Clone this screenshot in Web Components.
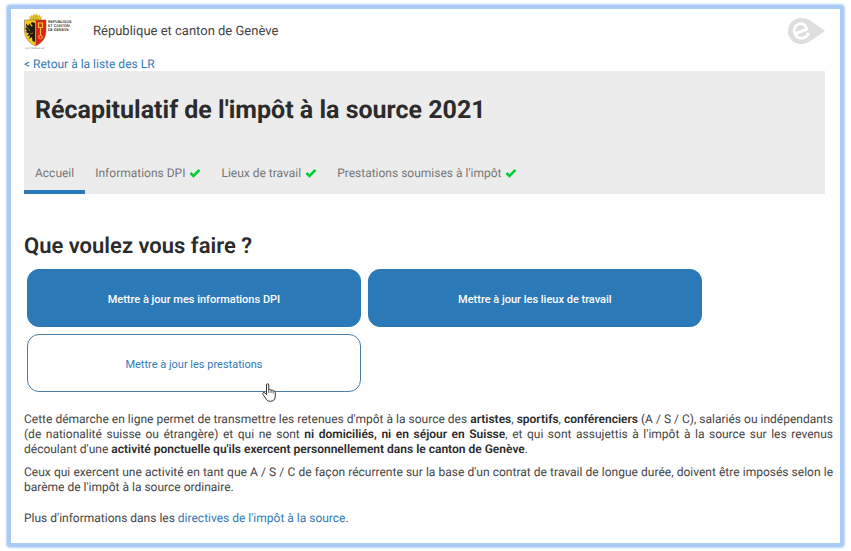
<!DOCTYPE html>
<html lang="fr">
<head>
<meta charset="utf-8">
<meta name="viewport" content="width=device-width, initial-scale=1">
<title>Récapitulatif de l'impôt à la source 2021</title>
<style>
  body {
    margin: 3px 5px 2px;
    background: #fff;
    color: #444;
    font-family: Roboto, "Liberation Sans", sans-serif;
    font-size: 12px;
    text-rendering: geometricPrecision;
    --color-link: #337ab7;
    --color-primary: #2b79b7;
    --color-title: #2b2b2b;
    --color-band: #ececec;
  }
</style>
</head>
<body>

<ge-page>
  <ge-header slot="header" label="République et canton de Genève"></ge-header>
  <ge-back-link href="#liste">&lt; Retour à la liste des LR</ge-back-link>
  <ge-banner heading="Récapitulatif de l'impôt à la source 2021">
    <ge-tab href="#accueil" active>Accueil</ge-tab>
    <ge-tab href="#dpi" done>Informations DPI</ge-tab>
    <ge-tab href="#lieux" done>Lieux de travail</ge-tab>
    <ge-tab href="#prestations" done>Prestations soumises à l'impôt</ge-tab>
  </ge-banner>
  <ge-actions heading="Que voulez vous faire ?">
    <ge-action>Mettre à jour mes informations DPI</ge-action>
    <ge-action>Mettre à jour les lieux de travail</ge-action>
    <ge-action outline>Mettre à jour les prestations</ge-action>
  </ge-actions>
  <ge-notice></ge-notice>
</ge-page>

<script>
/**
 * Small helper: opens a shadow root and fills it.
 */
class GeElement extends HTMLElement {
  constructor() {
    super();
    this.attachShadow({ mode: 'open' });
  }

  connectedCallback() {
    this.shadowRoot.innerHTML = this.render();
  }
}

class GePage extends GeElement {
  render() {
    // two nested borders: a pale halo round the blue edge
    return `
      <style>
        :host {
          display: block;
          border: 1px solid #eaf2fd;
          border-radius: 5px;
        }
        .halo {
          border: 1px solid #cfe1fa;
          border-radius: 4px;
          background: #a9cbf6;
        }
        .frame {
          margin: 4px;
          padding: 0 15px 17px 13px;
          background: #fff;
        }
        .halo { display: flow-root; }
      </style>
      <div class="halo">
        <div class="frame">
          <slot name="header"></slot>
          <main><slot></slot></main>
        </div>
      </div>
    `;
  }
}

class GeHeader extends GeElement {
  render() {
    return `
      <style>
        :host { display: block; }
        header {
          display: flex;
          align-items: center;
          height: 44px;
          padding-bottom: 3px;
          font-size: 13px;
        }
        .logo { width: 48px; height: 40px; margin-right: 21px; }
        .mark { width: 37px; height: 26px; margin-left: auto; }
      </style>
      <header>
        <svg class="logo" viewBox="0 0 48 40" role="img" aria-label="Genève">
          <!-- rising sun -->
          <path d="M5 9 L6 7 L4.600 5.500 L7 5.500 L7.500 3.500 L9 5 L10 2.500 L11.500 4 L13 2.500 L14 5 L16 3.500 L16 5.500 L18.500 5.500 L17 7 L18 9 Z" fill="#e0b92e"/>
          <path d="M7 9 A4.500 4 0 0 1 16 9 Z" fill="#efcf35"/>
          <path d="M9 6 h5 M8 8 h7" stroke="#a87d18" stroke-width=".6"/>
          <!-- shield -->
          <path d="M0.500 9 H11.500 V35 C5 32 0.500 27 .5 19 Z" fill="#f6cb20"/>
          <path d="M11.500 9 H22 V19 C22 27 18 32 11.500 35 Z" fill="#dc2418"/>
          <path d="M.5 9 H22 V19 C22 27 18 32 11.500 35 C5 32 .5 27 .5 19 Z" fill="none" stroke="#79591f" stroke-width=".5"/>
          <!-- half eagle -->
          <path d="M11 12 L8 11 L6.500 13 L8.500 14 L8 16 L5 12.500 L4.500 15 L2 12.500 L2.500 17 L1 17 L3 20 L1.500 21 L5 22.500 L3 25 L6 24.500 L5 28 L8 26 L8.500 30 L11 31 Z" fill="#211c10"/>
          <path d="M3 16 L6 20 M6 23 L9 22" stroke="#d6a81d" stroke-width=".6"/>
          <!-- key: ward on top, shaft, ring below -->
          <path d="M14.500 12 h4 v4.500 h-4 Z M16.500 16 V24.500" fill="none" stroke="#f2bf2d" stroke-width="1.200"/>
          <circle cx="16.500" cy="26" r="1.800" fill="none" stroke="#f2bf2d"/>
          <g fill="#333" font-family="Roboto, sans-serif" font-weight="500" font-size="4">
            <text x="24" y="12">REPUBLIQUE</text>
            <text x="24" y="16">ET CANTON</text>
            <text x="24" y="20">DE GENEVE</text>
          </g>
          <text x="1" y="38" fill="#777" font-family="Roboto, sans-serif" font-size="2">POST TENEBRAS LUX</text>
        </svg>
        <span>${this.getAttribute('label')}</span>
        <svg class="mark" viewBox="0 0 37 26" aria-hidden="true">
          <path d="M13 0 C17 0 20 1 23 3 L37 13 L23 22.500 C20 25 17 26 13 26 A13 13 0 0 1 13 0 Z" fill="#dedede"/>
          <g transform="rotate(-22 13 13)">
            <path d="M6.500 13.500 H19 C20 8.500 17 5.700 13.300 5.700 C9 5.700 6.300 9 6.300 13.100 C6.300 17.500 9.200 20.300 13.500 20.300 C16 20.300 18 19.300 19.300 17.500" fill="none" stroke="#fff" stroke-width="3"/>
          </g>
        </svg>
      </header>
    `;
  }
}

class GeBackLink extends GeElement {
  render() {
    return `
      <style>
        :host { display: block; padding-top: 1px; line-height: 14px; }
        a { color: var(--color-link); text-decoration: none; }
      </style>
      <a href="${this.getAttribute('href')}"><slot></slot></a>
    `;
  }
}

class GeBanner extends GeElement {
  render() {
    return `
      <style>
        :host {
          display: block;
          background: var(--color-band);
        }
        h1 {
          margin: 0;
          padding: 24px 11px 28px;
          color: var(--color-title);
          font-size: 25px;
          font-weight: 700;
          line-height: 32px;
        }
        nav { display: flex; }
      </style>
      <h1>${this.getAttribute('heading')}</h1>
      <nav><slot></slot></nav>
    `;
  }
}

class GeTab extends GeElement {
  render() {
    const tick = `
      <svg viewBox="0 0 12 10" aria-hidden="true">
        <path d="M1.500 5 L4.500 8 L10.500 1.800" fill="none" stroke="#0c3" stroke-width="2.600"/>
      </svg>`;
    return `
      <style>
        :host { display: block; }
        a {
          display: flex;
          align-items: center;
          gap: 4px;
          height: 35px;
          padding: 0 11px;
          border-bottom: 4px solid transparent;
          color: #777;
          text-decoration: none;
        }
        :host([active]) a { border-color: var(--color-primary); }
        :host([done]) a { padding: 0 10px; }
        svg { width: 12px; height: 10px; }
      </style>
      <a href="${this.getAttribute('href')}"><slot></slot>${this.hasAttribute('done') ? tick : ''}</a>
    `;
  }
}

class GeActions extends GeElement {
  render() {
    return `
      <style>
        :host { display: block; margin-top: 39px; }
        h2 {
          margin: 0 0 8px;
          color: var(--color-title);
          font-size: 22px;
          font-weight: 600;
          line-height: 28px;
        }
        .grid {
          display: grid;
          grid-template-columns: repeat(2, 42%);
          gap: 7px;
          padding: 0 3px;
        }
      </style>
      <h2>${this.getAttribute('heading')}</h2>
      <div class="grid"><slot></slot></div>
    `;
  }
}

class GeAction extends GeElement {
  render() {
    // the outlined one is drawn hovered, with the hand over its lower edge
    const hand = `
      <svg viewBox="0 0 14 19" aria-hidden="true">
        <path d="M4.500 11.500 V2 C4.500 .3 6.800 .3 6.800 2 V7 C7.300 6 9 6.200 9 7.500 C9.500 6.700 11.200 7 11.200 8.200 C12 7.600 13.300 8 13.300 9.200 V13 C13.300 16.500 11.500 18.300 8.500 18.300 C5.500 18.300 4.500 17 3.500 15 L1 11.500 C0 10 1.800 8.800 3 10 Z" fill="#fff" stroke="#333" stroke-width="1"/>
        <path d="M6.800 7 V10 M9 7.500 V10 M11.200 8.200 V10.500" stroke="#333" stroke-width=".8"/>
      </svg>`;
    return `
      <style>
        :host { display: block; position: relative; }
        button {
          display: block;
          width: 100%;
          height: 58px;
          padding-top: 3px;
          border: 1px solid var(--color-primary);
          border-radius: 12px;
          background: var(--color-primary);
          color: #fff;
          font: 500 11px Roboto, "Liberation Sans", sans-serif;
          cursor: pointer;
        }
        :host([outline]) button {
          border-color: #4b7ea6;
          background: #fff;
          color: var(--color-link);
          font-weight: 400;
        }
        svg {
          position: absolute;
          right: 85px;
          bottom: -10px;
          width: 14px;
          height: 19px;
        }
      </style>
      <button type="button"><slot></slot></button>
      ${this.hasAttribute('outline') ? hand : ''}
    `;
  }
}

class GeNotice extends GeElement {
  render() {
    return `
      <style>
        :host {
          display: block;
          margin: 20px -8px 0 0;
          line-height: 15px;
          text-align: justify;
        }
        p { margin: 0 0 8px; }
        p:last-child { margin: 16px 0 0; }
        strong { color: var(--color-title); font-weight: 600; }
        a { color: var(--color-link); text-decoration: none; }
      </style>
      <p>Cette démarche en ligne permet de transmettre les retenues d'mpôt à la source des <strong>artistes</strong>, <strong>sportifs</strong>, <strong>conférenciers</strong> (A / S / C), salariés ou indépendants (de nationalité suisse ou étrangère) et qui ne sont <strong>ni domiciliés, ni en séjour en Suisse</strong>, et qui sont assujettis à l'impôt à la source sur les revenus découlant d'une <strong>activité ponctuelle qu'ils exercent personnellement dans le canton de Genève</strong>.</p>
      <p>Ceux qui exercent une activité en tant que A / S / C de façon récurrente sur la base d'un contrat de travail de longue durée, doivent être imposés selon le barème de l'impôt à la source ordinaire.</p>
      <p>Plus d'informations dans les <a href="#directives">directives de l'impôt à la source</a>.</p>
    `;
  }
}

customElements.define('ge-page', GePage);
customElements.define('ge-header', GeHeader);
customElements.define('ge-back-link', GeBackLink);
customElements.define('ge-banner', GeBanner);
customElements.define('ge-tab', GeTab);
customElements.define('ge-actions', GeActions);
customElements.define('ge-action', GeAction);
customElements.define('ge-notice', GeNotice);
</script>
</body>
</html>
